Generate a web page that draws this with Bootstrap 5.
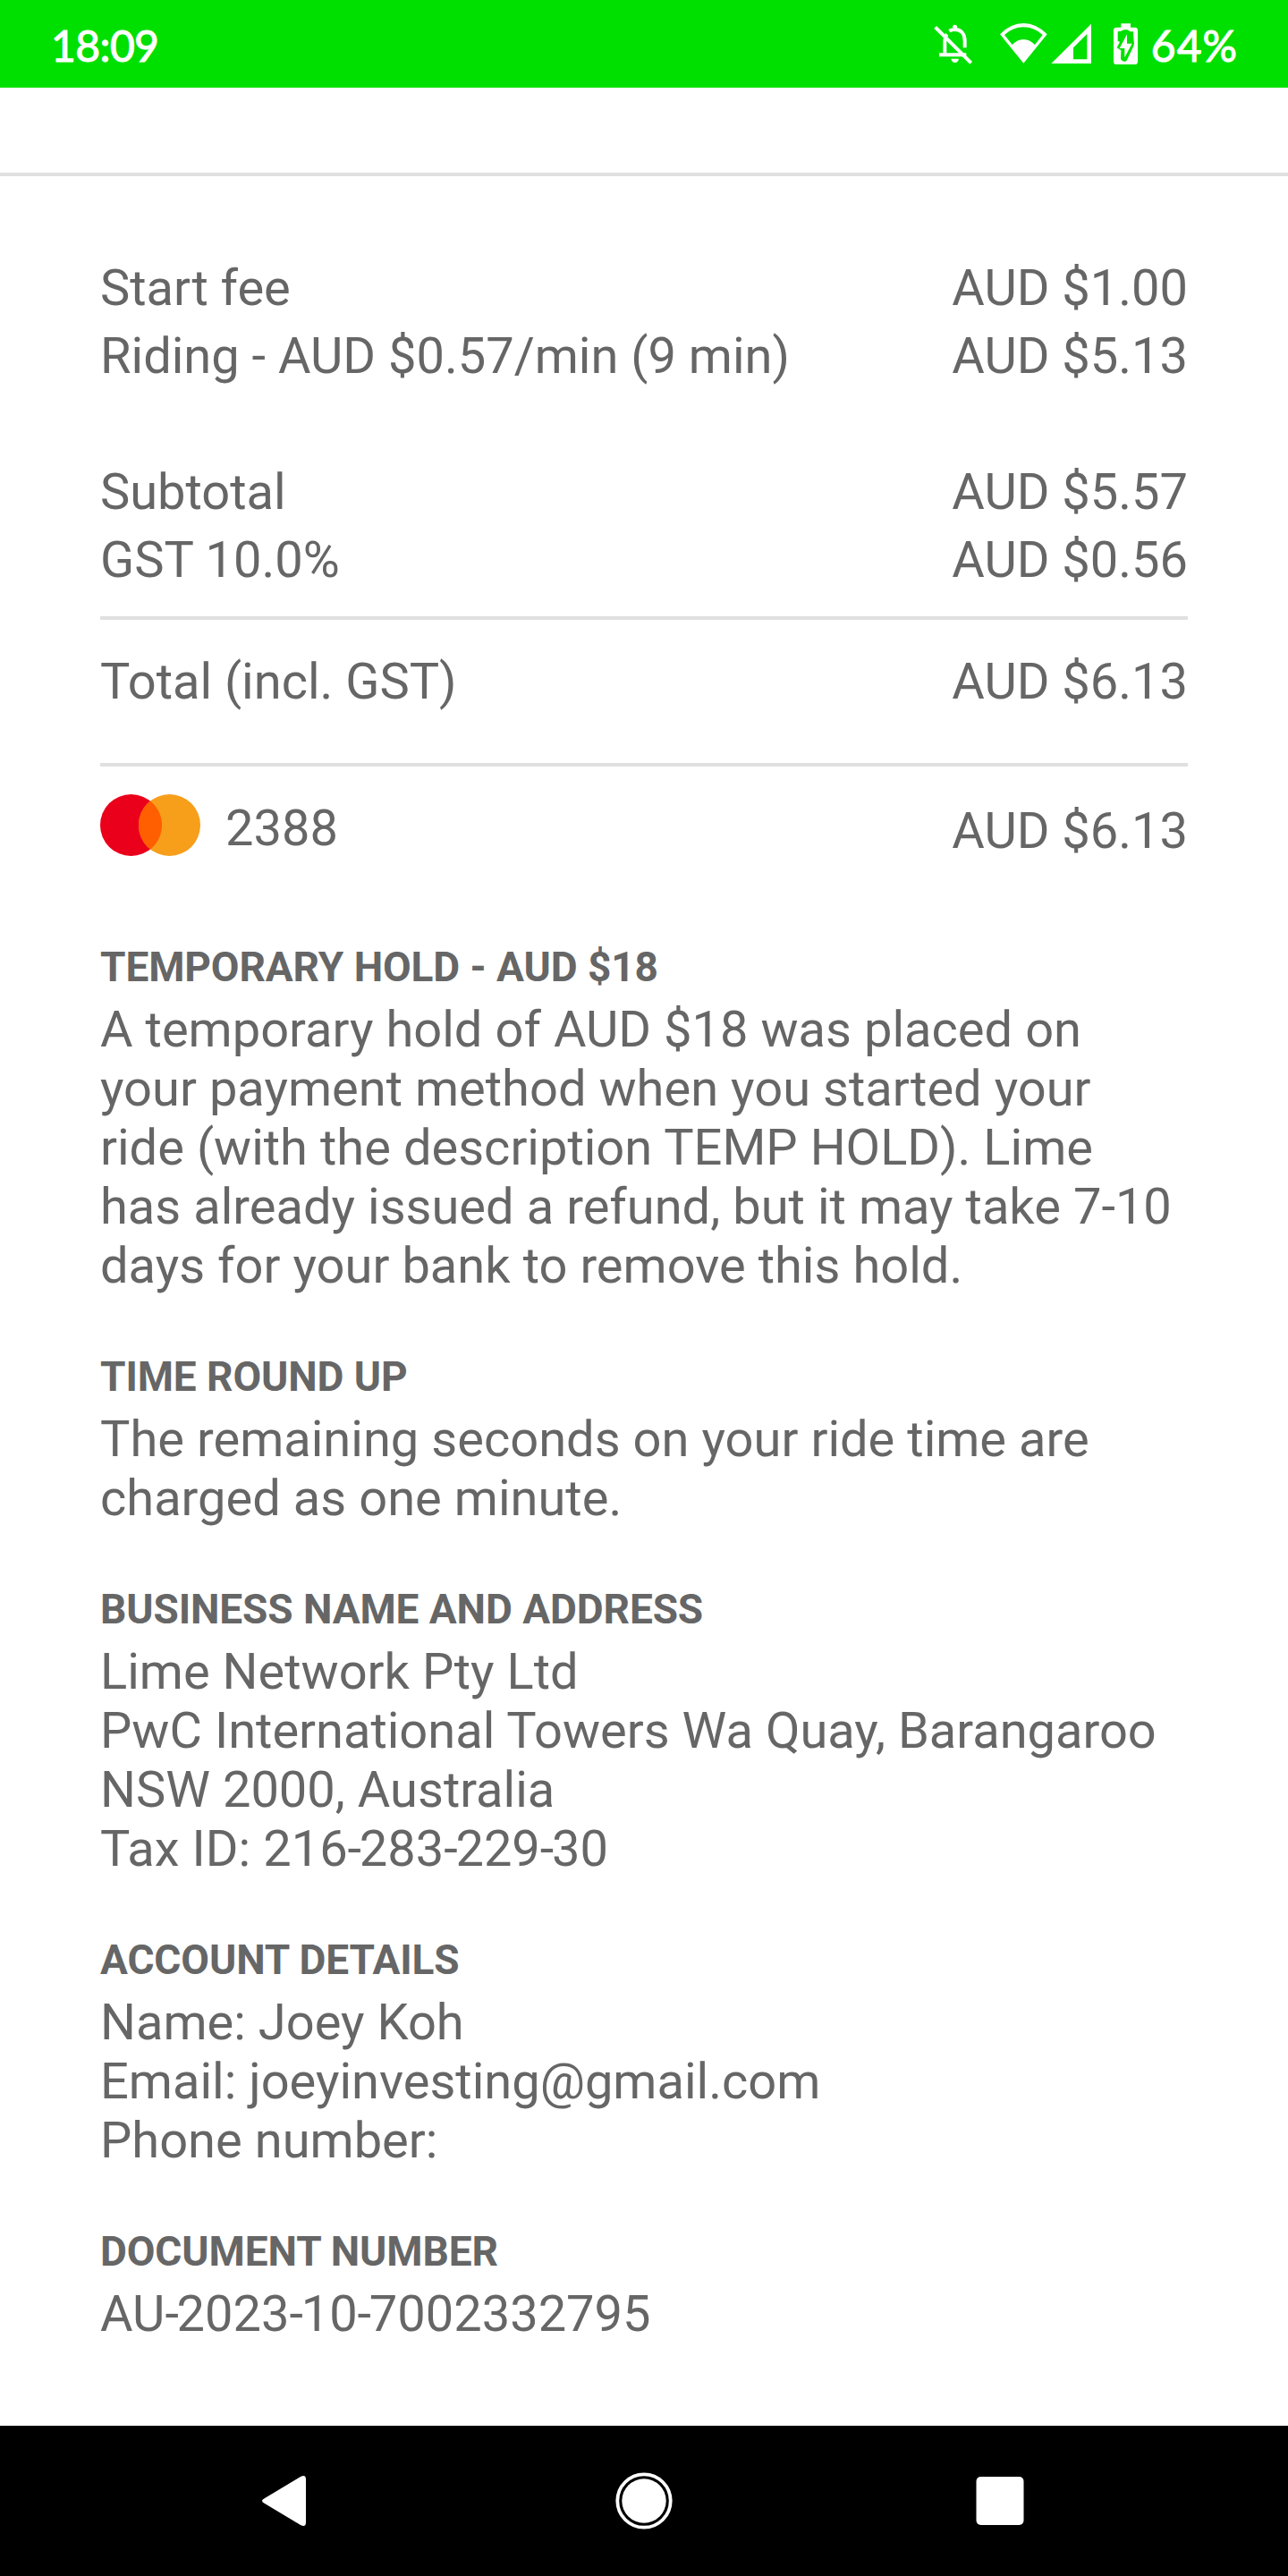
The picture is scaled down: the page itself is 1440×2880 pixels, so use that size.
<!DOCTYPE html>
<html lang="en">
<head>
<meta charset="utf-8">
<meta name="viewport" content="width=device-width, initial-scale=1">
<title>Ride receipt</title>
<link href="https://cdn.jsdelivr.net/npm/bootstrap@5.3.0/dist/css/bootstrap.min.css" rel="stylesheet">
<style>
body{font-family:Roboto,"Liberation Sans",sans-serif;font-size:56px;line-height:66px;color:#666;background:#fff}
.screen{width:1440px;height:2880px}
.status-bar{height:98px;background:#00e000;color:#fff;padding:0 56px 0 57px;font:400 48px/98px Lato,sans-serif;-webkit-text-stroke:1.1px #fff}
.status-icons{width:240px;height:98px;margin-right:6px;-webkit-text-stroke:0}
.clock{padding-top:2px;letter-spacing:-.6px}
.battery-level{padding-top:2px;letter-spacing:1px}
.toolbar-space{height:99px;border-bottom:4px solid #e0e0e0}
.receipt{padding:87px 112px 0}
.fee-row{line-height:76px}
.fee-gap{margin-top:76px}
.rule{height:4px;background:#e0e0e0}
.rule-subtotal{margin:25px 0 31px}
.rule-total{margin-top:53px}
.pay-row{height:105px;padding-top:31px}
.card-logo{width:112px;height:69px;margin-right:28px}
.card-digits{padding-top:5px}
.pay-amount{padding-top:8px}
.info-list{margin-top:92px;word-spacing:.15px}
.info-block{margin-bottom:64px}
.info-block h2{font-size:46px;line-height:54px;font-weight:700;margin:0 0 10px;letter-spacing:-.12px}
.hy{letter-spacing:-2.3px}
.nav-bar{height:168px;background:#000}
.nav-bar svg{display:block}
</style>
</head>
<body>
<div class="screen d-flex flex-column overflow-hidden">
<header class="status-bar d-flex justify-content-between flex-shrink-0">
<span class="clock">18:09</span>
<div class="d-flex">
<svg class="status-icons" viewBox="60 0 720 294" fill="#fff">
<!-- muted bell -->
<path d="M136 93V89a5 5 0 0 1 8 0v6" stroke="#fff" stroke-width="7"/>
<path d="M106 183V138Q106 124 113 115M121 104Q129 99 140 99C162 99 173 115 173 138V160" fill="none" stroke="#fff" stroke-width="12"/>
<path d="M87 178H178V190H87zM127 197H153Q151 209 140 210Q129 209 127 197z"/>
<path d="M74 91L194 211" stroke="#fff" stroke-width="12"/>
<!-- wifi -->
<path fill-rule="evenodd" d="M291 115Q327 78 370 78Q413 78 449 115L370 212zM306 117L332 150Q349 132 370 132Q391 132 408 150L434 117Q406 91 370 91Q334 91 306 117z"/>
<!-- mobile signal -->
<path fill-rule="evenodd" d="M597 80V213H463zM583 114L537 160V199H583z"/>
<!-- charging battery -->
<path fill-rule="evenodd" d="M697 79H729V92H744Q753 92 753 101V206Q753 216 743 216H682Q672 216 672 206V101Q672 92 682 92H697zM695 105L688 105Q685 106 686 112V137L693 141L683 160L697 169L696 198Q704 212 716 203L738 157Q743 148 740 139L738 106H728L719 100H707zM717 115V146H734L709 193V162H692z"/>
</svg>
<span class="battery-level">64%</span>
</div>
</header>
<div class="toolbar-space flex-shrink-0"></div>
<main class="receipt flex-grow-1">
<div class="fee-row d-flex justify-content-between"><span>Start fee</span><span>AUD $1.00</span></div>
<div class="fee-row d-flex justify-content-between"><span>Riding - AUD $0.57/min (9 min)</span><span>AUD $5.13</span></div>
<div class="fee-row fee-gap d-flex justify-content-between"><span>Subtotal</span><span>AUD $5.57</span></div>
<div class="fee-row d-flex justify-content-between"><span>GST 10.0%</span><span>AUD $0.56</span></div>
<div class="rule rule-subtotal"></div>
<div class="fee-row d-flex justify-content-between"><span>Total (incl. GST)</span><span>AUD $6.13</span></div>
<div class="rule rule-total"></div>
<div class="pay-row d-flex justify-content-between align-items-start">
<div class="d-flex">
<svg class="card-logo" viewBox="0 0 336 207">
<circle cx="103.5" cy="103.5" r="103.5" fill="#eb001b"/>
<circle cx="232.5" cy="103.5" r="103.5" fill="#f79e1b"/>
<path d="M168 22.5A103.5 103.5 0 0 1 168 184.500A103.500 103.500 0 0 1 168 22.500z" fill="#ff5f00"/>
</svg>
<span class="card-digits">2388</span>
</div>
<span class="pay-amount">AUD $6.13</span>
</div>
<div class="info-list">
<section class="info-block"><h2>TEMPORARY HOLD - AUD $18</h2>A temporary hold of AUD $18 was placed on<br>your payment method when you started your<br>ride (with the description TEMP HOLD). Lime<br>has already issued a refund, but it may take 7-10<br>days for your bank to remove this hold.</section>
<section class="info-block"><h2>TIME ROUND UP</h2>The remaining seconds on your ride time are<br>charged as one minute.</section>
<section class="info-block"><h2>BUSINESS NAME AND ADDRESS</h2>Lime Network Pty Ltd<br>PwC International Towers Wa Quay, Barangaroo<br>NSW 2000, Australia<br>Tax ID: 216<span class="hy">-</span>283<span class="hy">-</span>229<span class="hy">-</span>30</section>
<section class="info-block"><h2>ACCOUNT DETAILS</h2>Name: Joey Koh<br>Email: joeyinvesting@gmail.com<br>Phone number:</section>
<section class="info-block"><h2>DOCUMENT NUMBER</h2>AU<span class="hy">-</span>2023<span class="hy">-</span>10<span class="hy">-</span>7002332795</section>
</div>
</main>
<footer class="nav-bar d-flex align-items-center justify-content-center flex-shrink-0">
<svg width="860" height="72" viewBox="290 2760 860 72" fill="#fff">
<path d="M296 2793L336 2769Q342 2766 342 2772V2820Q342 2826 336 2823L296 2799Q290 2796 296 2793z"/>
<circle cx="720" cy="2796" r="29.700" fill="none" stroke="#fff" stroke-width="3.800"/>
<circle cx="720" cy="2796" r="24.700"/>
<rect x="1091.500" y="2769" width="53" height="54" rx="5"/>
</svg>
</footer>
</div>
<script src="https://cdn.jsdelivr.net/npm/bootstrap@5.3.0/dist/js/bootstrap.bundle.min.js"></script>
</body>
</html>
